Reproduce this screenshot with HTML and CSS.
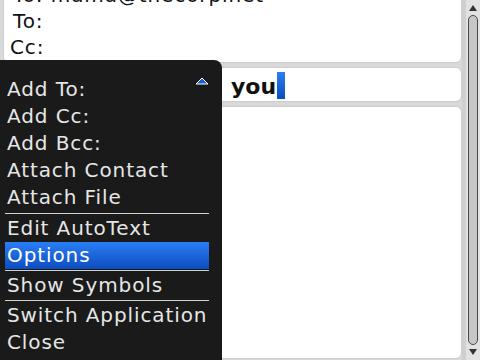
FILE: index.html
```html
<!DOCTYPE html>
<html>
<head>
<meta charset="utf-8">
<link rel="stylesheet" href="styles.css">
</head>
<body>
<div class="screen">
  <div class="main">
    <div class="box header">
      <div class="lines">
        <div class="line ind">To: mama@thecorpinet</div>
        <div class="line ind">To:</div>
        <div class="line">Cc:</div>
      </div>
    </div>
    <div class="box subject">
      <span class="subj-text">you</span><span class="cursor"></span>
    </div>
    <div class="box body-box"></div>
  </div>
  <div class="scroll">
    <svg class="arrow" width="8" height="6" viewBox="0 0 8 6"><polygon points="0,6 4,0 8,6" fill="#333"/></svg>
    <div class="pill"></div>
    <svg class="arrow" width="8" height="6" viewBox="0 0 8 6"><polygon points="0,0 8,0 4,6" fill="#333"/></svg>
  </div>

  <div class="menu">
    <svg class="menu-up" width="14" height="8" viewBox="0 0 14 8"><polygon points="1,7 7,1 13,7" fill="#1b5fd6" stroke="#ffffff" stroke-width="1"/></svg>
    <div class="item">Add To:</div>
    <div class="item">Add Cc:</div>
    <div class="item">Add Bcc:</div>
    <div class="item">Attach Contact</div>
    <div class="item">Attach File</div>
    <div class="sep sep4"></div>
    <div class="item">Edit AutoText</div>
    <div class="item selected">Options</div>
    <div class="sep"></div>
    <div class="item">Show Symbols</div>
    <div class="sep"></div>
    <div class="item">Switch Application</div>
    <div class="item">Close</div>
  </div>
</div>
</body>
</html>
```

FILE: styles.css
```css
html, body {
  margin: 0;
  padding: 0;
  width: 480px;
  height: 360px;
  overflow: hidden;
  background: #d8d8d8;
}

.screen {
  position: relative;
  width: 480px;
  height: 360px;
  display: flex;
  font-family: "DejaVu Sans", sans-serif;
}

.main {
  width: 462px;
  box-sizing: border-box;
  padding: 0 1px 2px 4px;
  display: flex;
  flex-direction: column;
  gap: 6px;
  background: #d9d9d9;
}

.box {
  background: #ffffff;
  border-radius: 5px;
  box-shadow: 0 0 0 1px #cdcdcd;
  overflow: hidden;
}

.header {
  height: 62px;
  flex: none;
  border-radius: 0 0 5px 5px;
}

.lines {
  margin-top: -18px;
  padding-left: 6px;
}

.line {
  font-size: 20px;
  line-height: 26px;
  letter-spacing: 0.9px;
  color: #111;
  white-space: nowrap;
}

.line.ind {
  padding-left: 3px;
}

.subject {
  height: 33px;
  flex: none;
  display: flex;
  align-items: flex-start;
  padding: 4px 0 0 227px;
  box-sizing: border-box;
}

.subj-text {
  font-weight: bold;
  font-size: 22px;
  line-height: 27px;
  margin-top: 1px;
  color: #111;
}

.cursor {
  width: 8px;
  height: 27px;
  margin-left: 1px;
  background: linear-gradient(#2b7ff4, #0b4cbe);
}

.body-box {
  flex: 1;
}

.scroll {
  width: 18px;
  box-sizing: border-box;
  border-left: 4px solid #d0d0d0;
  background: #e2e2e2;
  display: flex;
  flex-direction: column;
  align-items: center;
  padding: 5px 0 5px;
}

.arrow {
  display: block;
  flex: none;
}

.pill {
  flex: 1;
  width: 8px;
  margin: 4px 0;
  background: #c6c6c6;
  border: 1px solid #4a4a4a;
  border-radius: 5px;
}

.menu {
  position: absolute;
  left: 0;
  top: 60px;
  width: 222px;
  bottom: 0;
  background: #1a1a1a;
  border-top-right-radius: 8px;
  padding-top: 16px;
  box-sizing: border-box;
}

.menu-up {
  position: absolute;
  left: 195px;
  top: 17px;
  display: block;
}

.item {
  height: 27px;
  line-height: 27px;
  margin: 0 13px 0 5px;
  padding-left: 2px;
  font-size: 20px;
  letter-spacing: 0.9px;
  color: #e6e6e6;
  white-space: nowrap;
}

.item.selected {
  background: linear-gradient(#2a7ef5, #0d4dbf);
  color: #ffffff;
}

.sep {
  height: 3px;
  margin: 0 13px 0 5px;
  display: flex;
  align-items: center;
}

.sep::before {
  content: "";
  display: block;
  width: 100%;
  height: 1px;
  background: #d0d0d0;
}

.sep4 {
  height: 4px;
}
```
